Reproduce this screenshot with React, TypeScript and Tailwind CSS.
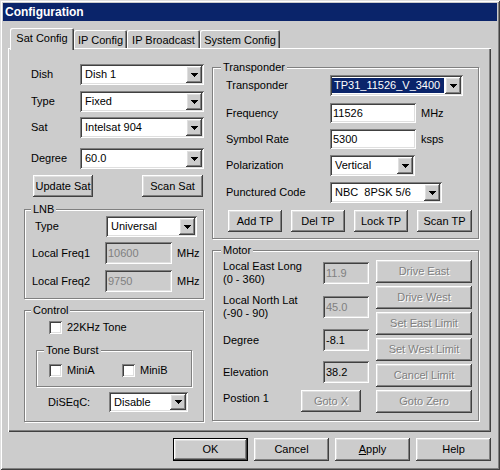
import React from "react";

const FACE = "bg-[#cccccc]";
const RAISED =
  "shadow-[inset_-1px_-1px_#404040,inset_1px_1px_#ffffff,inset_-2px_-2px_#808080,inset_2px_2px_#dfdfdf]";
const SUNKEN =
  "shadow-[inset_1px_1px_#808080,inset_-1px_-1px_#ffffff,inset_2px_2px_#404040,inset_-2px_-2px_#dfdfdf]";
const DIS = "text-[#808080] [text-shadow:1px_1px_0_#ffffff]";

function Arrow() {
  return (
    <div className={`w-[16px] self-stretch shrink-0 ${FACE} ${RAISED} flex items-center justify-center`}>
      <svg width="7" height="4" viewBox="0 0 7 4" shapeRendering="crispEdges">
        <rect x="0" y="0" width="7" height="1" fill="#000" />
        <rect x="1" y="1" width="5" height="1" fill="#000" />
        <rect x="2" y="2" width="3" height="1" fill="#000" />
        <rect x="3" y="3" width="1" height="1" fill="#000" />
      </svg>
    </div>
  );
}

function Combo({ className, value, selected }: { className: string; value: string; selected?: boolean }) {
  return (
    <div className={`${className} bg-white ${SUNKEN} p-[2px] flex shrink-0`}>
      <div className="flex-1 min-w-0 flex items-center">
        {selected ? (
          <span className="self-stretch flex-1 my-[1px] mr-[1px] bg-[#0a246a] text-white pl-[2px] flex items-center whitespace-pre">
            {value}
          </span>
        ) : (
          <span className="pl-[3px] whitespace-pre">{value}</span>
        )}
      </div>
      <Arrow />
    </div>
  );
}

function Field({ className, value, gray, dim }: { className: string; value: string; gray?: boolean; dim?: boolean }) {
  return (
    <div
      className={`${className} ${gray ? FACE : "bg-white"} ${SUNKEN} shrink-0 flex items-center pl-[3px] ${
        dim ? "text-[#808080]" : "text-black"
      }`}
    >
      {value}
    </div>
  );
}

function Btn({
  className,
  children,
  disabled,
}: {
  className: string;
  children: React.ReactNode;
  disabled?: boolean;
}) {
  return (
    <div
      className={`${className} ${FACE} ${RAISED} shrink-0 flex items-center justify-center ${disabled ? DIS : ""}`}
    >
      {children}
    </div>
  );
}

function Check() {
  return <div className={`w-[13px] h-[13px] bg-white ${SUNKEN} shrink-0`} />;
}

function Group({
  label,
  className,
  labelLeft,
  children,
}: {
  label: string;
  className: string;
  labelLeft: string;
  children?: React.ReactNode;
}) {
  return (
    <div className={`relative border border-[#808080] shadow-[inset_1px_1px_#ffffff,1px_1px_#ffffff] ${className}`}>
      <span className={`absolute ${labelLeft} -top-[7px] px-[2px] leading-[13px] ${FACE}`}>{label}</span>
      {children}
    </div>
  );
}

const TAB = "shadow-[inset_1px_1px_#ffffff,inset_-1px_0_#404040,inset_-2px_0_#808080] rounded-t-[2px]";

export default function App() {
  return (
    <div
      className={`w-[500px] h-[470px] ${FACE} shadow-[inset_1px_1px_#dfdfdf,inset_-1px_-1px_#404040,inset_2px_2px_#ffffff,inset_-2px_-2px_#808080] p-[3px] font-['Liberation_Sans',Arial,sans-serif] text-[11px] text-black leading-[13px] overflow-hidden`}
    >
      <div className="h-[18px] bg-[#0a246a] flex items-center pl-[2px] text-white font-bold text-[12px]">
        Configuration
      </div>
      <div className="ml-[5px] mt-[7px]">
        {/* tabs */}
        <div className="flex items-start h-[20px] pl-[2px]">
          <div className={`relative z-10 h-[22px] w-[64px] ${FACE} ${TAB} flex items-start justify-center pt-[4px]`}>
            Sat Config
          </div>
          <div className={`mt-[2px] h-[18px] w-[53px] ${FACE} ${TAB} flex items-start justify-center pt-[4px]`}>
            IP Config
          </div>
          <div className={`mt-[2px] h-[18px] w-[73px] ${FACE} ${TAB} flex items-start justify-center pt-[4px]`}>
            IP Broadcast
          </div>
          <div className={`mt-[2px] h-[18px] w-[80px] ${FACE} ${TAB} flex items-start justify-center pt-[4px]`}>
            System Config
          </div>
        </div>

        {/* panel */}
        <div
          className={`relative w-[483px] h-[384px] ${FACE} shadow-[inset_1px_1px_#ffffff,inset_-1px_-1px_#404040,inset_-2px_-2px_#808080] flex gap-[8px] pl-[16px]`}
        >
          {/* left column */}
          <div className="w-[180px] pt-[16px] flex flex-col">
            <div className="flex items-center">
              <span className="w-[57px] pl-[7px]">Dish</span>
              <Combo className="w-[124px] h-[21px]" value="Dish 1" />
            </div>
            <div className="flex items-center mt-[6px]">
              <span className="w-[57px] pl-[7px]">Type</span>
              <Combo className="w-[124px] h-[21px]" value="Fixed" />
            </div>
            <div className="flex items-center mt-[5px]">
              <span className="w-[57px] pl-[7px]">Sat</span>
              <Combo className="w-[124px] h-[21px]" value="Intelsat 904" />
            </div>
            <div className="flex items-center mt-[10px]">
              <span className="w-[57px] pl-[7px]">Degree</span>
              <Combo className="w-[124px] h-[21px]" value="60.0" />
            </div>
            <div className="flex justify-between pl-[9px] pr-[1px] mt-[6px]">
              <Btn className="w-[60px] h-[22px]">Update Sat</Btn>
              <Btn className="w-[61px] h-[22px]">Scan Sat</Btn>
            </div>

            <Group label="LNB" labelLeft="left-[6px]" className="mt-[12px] h-[90px] flex flex-col">
              <div className="flex items-center mt-[6px]">
                <span className="w-[81px] pl-[10px]">Type</span>
                <Combo className="w-[91px] h-[21px]" value="Universal" />
              </div>
              <div className="flex items-center mt-[5px]">
                <span className="w-[80px] pl-[7px]">Local Freq1</span>
                <Field className="w-[67px] h-[22px]" value="10600" gray dim />
                <span className="ml-[5px]">MHz</span>
              </div>
              <div className="flex items-center mt-[6px]">
                <span className="w-[80px] pl-[7px]">Local Freq2</span>
                <Field className="w-[67px] h-[22px]" value="9750" gray dim />
                <span className="ml-[5px]">MHz</span>
              </div>
            </Group>

            <Group label="Control" labelLeft="left-[6px]" className="mt-[11px] h-[112px] flex flex-col">
              <div className="flex items-center mt-[10px] pl-[24px]">
                <Check />
                <span className="ml-[5px]">22KHz Tone</span>
              </div>
              <Group label="Tone Burst" labelLeft="left-[7px]" className="mt-[16px] ml-[11px] w-[156px] h-[37px]">
                <div className="flex items-center mt-[13px] pl-[12px]">
                  <div className="w-[73px] flex items-center">
                    <Check />
                    <span className="ml-[5px]">MiniA</span>
                  </div>
                  <Check />
                  <span className="ml-[5px]">MiniB</span>
                </div>
              </Group>
              <div className="flex items-center mt-[5px]">
                <span className="w-[84px] pl-[23px]">DiSEqC:</span>
                <Combo className="w-[79px] h-[20px]" value="Disable" />
              </div>
            </Group>
          </div>

          {/* right column */}
          <div className="w-[267px] pt-[19px] flex flex-col">
            <Group label="Transponder" labelLeft="left-[8px]" className="h-[172px] flex flex-col">
              <div className="flex items-center mt-[7px]">
                <span className="w-[117px] pl-[13px]">Transponder</span>
                <Combo className="w-[133px] h-[21px]" value="TP31_11526_V_3400" selected />
              </div>
              <div className="flex items-center mt-[7px]">
                <span className="w-[117px] pl-[13px]">Frequency</span>
                <Field className="w-[86px] h-[20px]" value="11526" />
                <span className="ml-[5px]">MHz</span>
              </div>
              <div className="flex items-center mt-[6px]">
                <span className="w-[117px] pl-[13px]">Symbol Rate</span>
                <Field className="w-[86px] h-[20px]" value="5300" />
                <span className="ml-[5px]">ksps</span>
              </div>
              <div className="flex items-center mt-[6px]">
                <span className="w-[117px] pl-[13px]">Polarization</span>
                <Combo className="w-[85px] h-[21px]" value="Vertical" />
              </div>
              <div className="flex items-center mt-[6px]">
                <span className="w-[117px] pl-[13px]">Punctured Code</span>
                <Combo className="w-[112px] h-[21px]" value="NBC  8PSK 5/6" />
              </div>
              <div className="flex gap-[9px] pl-[15px] mt-[7px]">
                <Btn className="w-[54px] h-[22px]">Add TP</Btn>
                <Btn className="w-[54px] h-[22px]">Del TP</Btn>
                <Btn className="w-[54px] h-[22px]">Lock TP</Btn>
                <Btn className="w-[55px] h-[22px]">Scan TP</Btn>
              </div>
            </Group>

            <Group label="Motor" labelLeft="left-[8px]" className="mt-[11px] h-[171px] flex">
              <div className="flex flex-col pl-[10px]">
                <div className="flex items-center mt-[11px] h-[22px]">
                  <span className="w-[100px]">
                    Local East Long
                    <br />
                    (0 - 360)
                  </span>
                  <Field className="w-[46px] h-[22px]" value="11.9" gray dim />
                </div>
                <div className="flex items-center mt-[12px] h-[22px]">
                  <span className="w-[100px]">
                    Local North Lat
                    <br />
                    (-90 - 90)
                  </span>
                  <Field className="w-[46px] h-[22px]" value="45.0" gray dim />
                </div>
                <div className="flex items-center mt-[11px]">
                  <span className="w-[100px]">Degree</span>
                  <Field className="w-[46px] h-[22px]" value="-8.1" gray />
                </div>
                <div className="flex items-center mt-[10px]">
                  <span className="w-[100px]">Elevation</span>
                  <Field className="w-[46px] h-[22px]" value="38.2" gray />
                </div>
                <div className="flex items-start mt-[7px]">
                  <span className="w-[78px] pt-[2px]">Postion 1</span>
                  <Btn className="w-[60px] h-[22px]" disabled>
                    Goto X
                  </Btn>
                </div>
              </div>
              <div className="flex flex-col gap-[3px] mt-[9px] ml-[7px]">
                <Btn className="w-[96px] h-[23px]" disabled>
                  Drive East
                </Btn>
                <Btn className="w-[96px] h-[23px]" disabled>
                  Drive West
                </Btn>
                <Btn className="w-[96px] h-[23px]" disabled>
                  Set East Limit
                </Btn>
                <Btn className="w-[96px] h-[23px]" disabled>
                  Set West Limit
                </Btn>
                <Btn className="w-[96px] h-[23px]" disabled>
                  Cancel Limit
                </Btn>
                <Btn className="w-[96px] h-[23px]" disabled>
                  Goto Zero
                </Btn>
              </div>
            </Group>
          </div>
        </div>

        {/* bottom buttons */}
        <div className="w-[483px] flex justify-end gap-[6px] mt-[6px]">
          <div className="w-[75px] h-[23px] border border-black">
            <Btn className="w-full h-full">OK</Btn>
          </div>
          <Btn className="w-[75px] h-[23px]">Cancel</Btn>
          <Btn className="w-[75px] h-[23px]">
            <span>
              <span className="underline">A</span>pply
            </span>
          </Btn>
          <Btn className="w-[75px] h-[23px]">Help</Btn>
        </div>
      </div>
    </div>
  );
}
